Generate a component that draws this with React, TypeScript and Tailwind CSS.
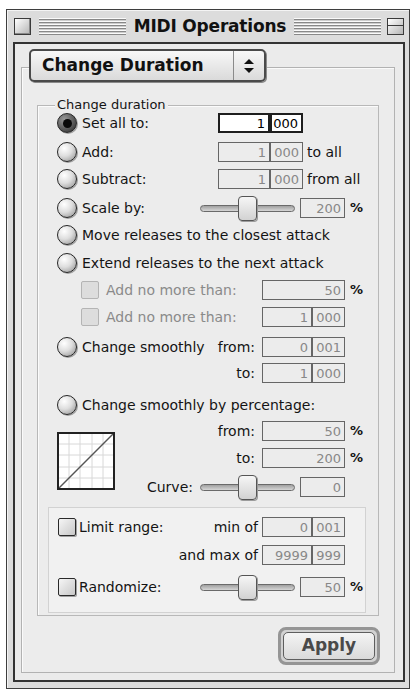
import React from "react";

function Radio({ on = false }: { on?: boolean }) {
  return (
    <span
      className={`flex h-[20px] w-[20px] flex-none items-center justify-center rounded-full border border-[#262626] shadow-[1px_1px_0_#a0a0a0] ${
        on
          ? "bg-[radial-gradient(circle_at_35%_30%,#9a9a9a_0%,#4a4a4a_70%,#222_100%)]"
          : "bg-[radial-gradient(circle_at_35%_30%,#ffffff_0%,#dedede_45%,#8a8a8a_100%)]"
      }`}
    >
      {on && <span className="h-[9px] w-[9px] rounded-full bg-[#0a0a0a]" />}
    </span>
  );
}

function Check({ off = false }: { off?: boolean }) {
  return (
    <span
      className={`block h-[18px] w-[18px] flex-none rounded-[2px] ${
        off
          ? "border border-[#b4b4b4] bg-[#dddddd]"
          : "border border-[#2a2a2a] bg-[linear-gradient(135deg,#f6f6f6,#c8c8c8)] shadow-[1px_1px_0_#a0a0a0]"
      }`}
    />
  );
}

function Field({ w, v, active = false }: { w: string; v: string; active?: boolean }) {
  return (
    <div
      className={`flex h-[20px] flex-none items-center justify-end pr-[3px] text-[13px] leading-none ${w} ${
        active ? "border-2 border-[#1e1e1e] bg-white text-black" : "border border-[#666] bg-[#ececec] text-[#888]"
      }`}
    >
      {v}
    </div>
  );
}

function Slider() {
  return (
    <div className="relative h-[25px] w-[95px] flex-none">
      <div className="absolute left-0 right-0 top-[9px] h-[7px] rounded-full border border-[#6a6a6a] bg-[linear-gradient(#a0a0a0,#d6d6d6)]" />
      <div className="absolute left-[38px] top-0 h-[25px] w-[19px] rounded-[4px] border border-[#555] bg-[linear-gradient(#f6f6f6,#d2d2d2)] shadow-[1px_1px_0_#9c9c9c]" />
    </div>
  );
}

function Stripes() {
  return (
    <div className="h-[17px] flex-1 bg-[repeating-linear-gradient(to_bottom,#fafafa_0px,#fafafa_1px,#888_1px,#888_2px,#cdcdcd_2px,#cdcdcd_3px)]" />
  );
}

function Graph() {
  return (
    <svg width="58" height="58" viewBox="0 0 58 58">
      <rect x="0" y="0" width="58" height="58" fill="#ffffff" />
      {[12, 23, 35, 46].map((p) => (
        <g key={p}>
          <line x1={p} y1="2" x2={p} y2="56" stroke="#d8d8d8" strokeWidth="1" />
          <line x1="2" y1={p} x2="56" y2={p} stroke="#d8d8d8" strokeWidth="1" />
        </g>
      ))}
      <line x1="2" y1="56" x2="56" y2="2" stroke="#555" strokeWidth="1.5" />
      <rect x="1" y="1" width="56" height="56" fill="none" stroke="#222" strokeWidth="2" />
    </svg>
  );
}

export default function App() {
  return (
    <div className="min-h-[690px] bg-white pl-[6px] pt-[9px] font-['DejaVu_Sans',sans-serif] text-[14px] text-[#141414]">
      <div className="flex h-[680px] w-[404px] flex-col border border-[#3e3e3e] bg-[#dcdcdc] pb-[6px] shadow-[inset_1px_1px_0_#f4f4f4]">
        {/* title bar */}
        <div className="flex h-[32px] flex-none items-center gap-[8px] pl-[7px] pr-[5px]">
          <span className="block h-[17px] w-[17px] flex-none border border-[#3a3a3a] bg-[linear-gradient(135deg,#ffffff,#b4b4b4)] shadow-[inset_-1px_-1px_0_#888]" />
          <Stripes />
          <span className="flex-none text-[17px] font-bold leading-none tracking-[-0.2px] text-[#111]">MIDI Operations</span>
          <Stripes />
          <span className="ml-[-2px] flex h-[17px] w-[17px] flex-none flex-col border border-[#3a3a3a] bg-[linear-gradient(135deg,#ffffff,#b4b4b4)]">
            <span className="h-[7px] border-b border-[#3a3a3a]" />
          </span>
        </div>

        {/* content */}
        <div className="ml-[6px] mr-[4px] flex flex-1 flex-col border-2 border-[#333] bg-[#ebebeb] pb-[7px] pt-[5px]">
          <div className="relative z-10 ml-[14px] flex h-[33px] w-[237px] items-center rounded-[5px] border-2 border-[#4a4a4a] bg-[linear-gradient(#f8f8f8,#dadada)] shadow-[1px_1px_0_#8a8a8a]">
            <span className="flex-1 pl-[11px] text-[17px] font-bold leading-none text-[#111]">Change Duration</span>
            <span className="flex h-full w-[31px] items-center justify-center border-l border-[#8a8a8a]">
              <svg width="10" height="14" viewBox="0 0 10 14">
                <path d="M5 0 L10 5 L0 5 Z" fill="#111" />
                <path d="M0 9 L10 9 L5 14 Z" fill="#111" />
              </svg>
            </span>
          </div>

          <div className="ml-[6px] mr-[8px] mt-[-15px] flex flex-1 flex-col border border-[#b2b2b2] bg-[#ececec] pt-[37px] shadow-[inset_1px_1px_0_#fafafa]">
            {/* group box */}
            <div className="relative ml-[15px] flex h-[511px] w-[342px] flex-none flex-col border border-[#b8b8b8] shadow-[inset_1px_1px_0_#fbfbfb]">
              <span className="absolute left-[17px] top-[-9px] bg-[#ececec] px-[2px] text-[13px] leading-[16px]">Change duration</span>

              <div className="mt-[7px] flex h-[20px] items-center">
                <div className="flex w-[180px] flex-none items-center gap-[5px] pl-[19px]">
                  <Radio on />
                  <span>Set all to:</span>
                </div>
                <Field w="w-[52px]" v="1" active />
                <Field w="w-[33px]" v="000" active />
              </div>

              <div className="mt-[9px] flex h-[20px] items-center">
                <div className="flex w-[180px] flex-none items-center gap-[5px] pl-[19px]">
                  <Radio />
                  <span>Add:</span>
                </div>
                <Field w="w-[52px]" v="1" />
                <Field w="w-[33px]" v="000" />
                <span className="ml-[4px]">to all</span>
              </div>

              <div className="mt-[7px] flex h-[20px] items-center">
                <div className="flex w-[180px] flex-none items-center gap-[5px] pl-[19px]">
                  <Radio />
                  <span>Subtract:</span>
                </div>
                <Field w="w-[52px]" v="1" />
                <Field w="w-[33px]" v="000" />
                <span className="ml-[4px]">from all</span>
              </div>

              <div className="mt-[9px] flex h-[20px] items-center">
                <div className="flex w-[162px] flex-none items-center gap-[5px] pl-[19px]">
                  <Radio />
                  <span>Scale by:</span>
                </div>
                <Slider />
                <span className="ml-[5px]">
                  <Field w="w-[45px]" v="200" />
                </span>
                <span className="ml-[5px] text-[13px] font-bold">%</span>
              </div>

              <div className="mt-[7px] flex h-[20px] items-center gap-[5px] pl-[19px]">
                <Radio />
                <span>Move releases to the closest attack</span>
              </div>

              <div className="mt-[8px] flex h-[20px] items-center gap-[5px] pl-[19px]">
                <Radio />
                <span>Extend releases to the next attack</span>
              </div>

              <div className="mt-[7px] flex h-[20px] items-center">
                <div className="flex w-[224px] flex-none items-center gap-[7px] pl-[43px] text-[#8a8a8a]">
                  <Check off />
                  <span>Add no more than:</span>
                </div>
                <Field w="w-[83px]" v="50" />
                <span className="ml-[5px] text-[13px] font-bold">%</span>
              </div>

              <div className="mt-[7px] flex h-[20px] items-center">
                <div className="flex w-[224px] flex-none items-center gap-[7px] pl-[43px] text-[#8a8a8a]">
                  <Check off />
                  <span>Add no more than:</span>
                </div>
                <Field w="w-[50px]" v="1" />
                <Field w="w-[33px]" v="000" />
              </div>

              <div className="mt-[10px] flex h-[20px] items-center">
                <div className="flex w-[224px] flex-none items-center gap-[5px] pl-[19px] pr-[7px]">
                  <Radio />
                  <span className="flex-1">Change smoothly</span>
                  <span>from:</span>
                </div>
                <Field w="w-[50px]" v="0" />
                <Field w="w-[33px]" v="001" />
              </div>

              <div className="mt-[6px] flex h-[20px] items-center">
                <div className="w-[224px] flex-none pr-[7px] text-right">to:</div>
                <Field w="w-[50px]" v="1" />
                <Field w="w-[33px]" v="000" />
              </div>

              <div className="mt-[12px] flex h-[20px] items-center gap-[5px] pl-[19px]">
                <Radio />
                <span>Change smoothly by percentage:</span>
              </div>

              <div className="mt-[6px] flex h-[76px]">
                <div className="w-[96px] flex-none pl-[19px] pt-[11px]">
                  <Graph />
                </div>
                <div className="flex flex-col">
                  <div className="flex h-[20px] items-center">
                    <div className="w-[128px] flex-none pr-[7px] text-right">from:</div>
                    <Field w="w-[83px]" v="50" />
                    <span className="ml-[5px] text-[13px] font-bold">%</span>
                  </div>
                  <div className="mt-[7px] flex h-[20px] items-center">
                    <div className="w-[128px] flex-none pr-[7px] text-right">to:</div>
                    <Field w="w-[83px]" v="200" />
                    <span className="ml-[5px] text-[13px] font-bold">%</span>
                  </div>
                  <div className="mt-[9px] flex h-[20px] items-center">
                    <div className="w-[66px] flex-none pr-[7px] text-right">Curve:</div>
                    <Slider />
                    <span className="ml-[5px]">
                      <Field w="w-[45px]" v="0" />
                    </span>
                  </div>
                </div>
              </div>

              {/* limit / randomize box */}
              <div className="ml-[10px] mt-[10px] h-[106px] w-[318px] border border-[#d2d2d2] bg-[#f1f1f1] pt-[9px]">
                <div className="flex h-[20px] items-center">
                  <div className="flex w-[213px] flex-none items-center gap-[3px] pl-[9px] pr-[4px]">
                    <Check />
                    <span className="flex-1">Limit range:</span>
                    <span>min of</span>
                  </div>
                  <Field w="w-[50px]" v="0" />
                  <Field w="w-[33px]" v="001" />
                </div>
                <div className="mt-[8px] flex h-[20px] items-center">
                  <div className="w-[213px] flex-none pr-[4px] text-right">and max of</div>
                  <Field w="w-[50px]" v="9999" />
                  <Field w="w-[33px]" v="999" />
                </div>
                <div className="mt-[12px] flex h-[20px] items-center">
                  <div className="flex w-[151px] flex-none items-center gap-[3px] pl-[9px]">
                    <Check />
                    <span>Randomize:</span>
                  </div>
                  <Slider />
                  <span className="ml-[5px]">
                    <Field w="w-[45px]" v="50" />
                  </span>
                  <span className="ml-[5px] text-[13px] font-bold">%</span>
                </div>
              </div>
            </div>

            <div className="mr-[14px] mt-[11px] flex justify-end">
              <div className="h-[38px] w-[102px] rounded-[8px] border-[3px] border-[#959595] bg-[#d2d2d2] p-[2px]">
                <div className="flex h-full items-center justify-center rounded-[5px] border border-[#5e5e5e] bg-[linear-gradient(#f4f4f4,#dadada)] text-[17px] font-bold text-[#4a4a4a]">
                  Apply
                </div>
              </div>
            </div>
          </div>
        </div>
      </div>
    </div>
  );
}
